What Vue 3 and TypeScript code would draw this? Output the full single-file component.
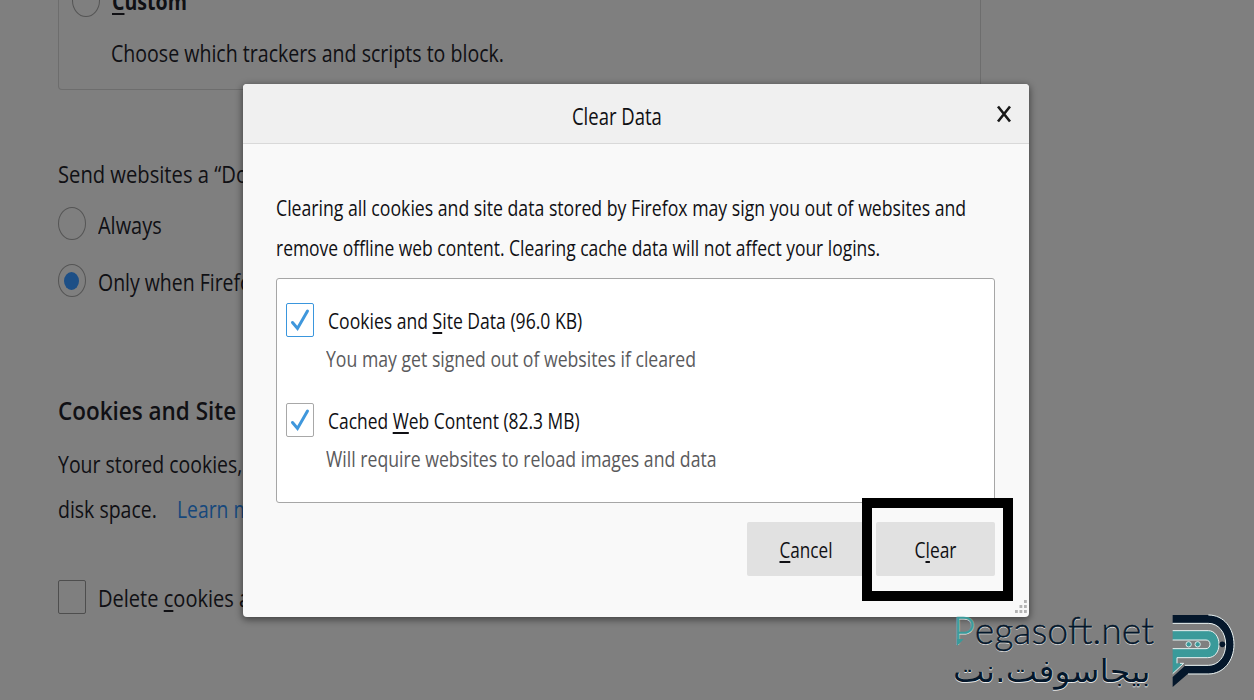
<template>
  <div class="page">
    <!-- preferences page behind the dialog -->
    <section class="tracking-card">
      <div class="card-option">
        <span class="radio"></span>
        <span v-fit="75" class="option-title"><u>C</u>ustom</span>
      </div>
      <div class="card-text">
        <span v-fit="393">Choose which trackers and scripts to block.</span>
      </div>
    </section>

    <section class="dnt">
      <div class="dnt-title"><span v-fit="190">Send websites a “Do</span></div>
      <div v-for="item in dntOptions" :key="item.label" class="dnt-option">
        <span :class="['radio', item.checked ? 'checked' : '']"></span>
        <span v-fit="item.width">{{ item.label }}</span>
      </div>
    </section>

    <section class="site-data">
      <h2><span v-fit="178">Cookies and Site</span></h2>
      <div class="line"><span v-fit="184">Your stored cookies,</span></div>
      <div class="line two">
        <span class="disk"><span v-fit="99">disk space.</span></span>
        <a class="link"><span v-fit="74">Learn m</span></a>
      </div>
      <div class="delete-row">
        <span class="box"></span>
        <span v-fit="152">Delete <u>c</u>ookies a</span>
      </div>
    </section>

    <!-- clear data dialog -->
    <div class="dialog">
      <header class="dialog-header">
        <h1><span v-fit="90">Clear Data</span></h1>
        <button class="close" aria-label="Close">
          <svg width="16" height="18" viewBox="0 0 16 18">
            <path d="M2 1.5 L14 16.5 M14 1.5 L2 16.5" />
          </svg>
        </button>
      </header>
      <div class="dialog-body">
        <p><span v-fit="690">Clearing all cookies and site data stored by Firefox may sign you out of websites and</span></p>
        <p><span v-fit="604">remove offline web content. Clearing cache data will not affect your logins.</span></p>

        <div class="list">
          <div v-for="item in clearItems" :key="item.key" class="item">
            <div class="item-label">
              <span :class="['check', item.focused ? 'focused' : '']">
                <svg width="28" height="34" viewBox="0 0 28 34">
                  <path d="M6.5 19.5 L11.5 25.5 L21.5 8" />
                </svg>
              </span>
              <span v-fit="item.width">{{ item.before }}<u>{{ item.key }}</u>{{ item.after }}</span>
            </div>
            <div class="item-hint">
              <span v-fit="item.hintWidth">{{ item.hint }}</span>
            </div>
          </div>
        </div>

        <div class="actions">
          <button class="btn"><span v-fit="53" class="mid"><u>C</u>ancel</span></button>
          <button class="btn"><span v-fit="42" class="mid">C<u>l</u>ear</span></button>
        </div>
      </div>
      <svg class="grip" width="12" height="14" viewBox="0 0 12 14">
        <rect v-for="(dot, i) in gripDots" :key="i" :x="dot[0]" :y="dot[1]" width="2.8" height="3" />
      </svg>
    </div>

    <div class="highlight"></div>

    <!-- site watermark -->
    <div class="watermark">
      <div class="brand">
        <div class="brand-en"><span v-fit="201"><b>P</b>egasoft.net</span></div>
        <div class="brand-ar"><span v-fit="198" dir="rtl">بيجاسوفت.نت</span></div>
      </div>
      <svg class="logo" width="94" height="95" viewBox="0 0 282 285">
        <path class="navy" d="M38 30 H145 C192 30 222 70 222 118 C222 168 190 206 145 206 H84 L38 246 V216 L75 182 H145 C175 182 197 155 197 118 C197 82 175 54 145 54 H38 Z" />
        <path class="rim" d="M38 55 H145 C175 55 197 82 197 118 C197 155 175 181 145 181 H75 M84 207 H145 C190 207 222 168 222 118 C222 70 192 30 145 30" />
        <path class="teal" d="M38 77 H145 C165 77 177 97 177 118 C177 141 164 158 143 158 H51 V175 H71 L38 206 V131 H138 C145 131 150 125 150 118 C150 110 145 105 138 105 H38 Z" />
        <path class="rim" d="M38 77 H145 C165 77 177 97 177 118 C177 141 164 158 143 158 H51 V175 M38 105 H138 C145 105 150 110 150 118 C150 125 145 131 138 131 H38 M60 175 H71 L38 206" />
        <circle class="eye" cx="86" cy="118" r="8" />
        <circle class="eye" cx="113" cy="118" r="8" />
        <circle class="dot" cx="187" cy="118" r="8.5" />
      </svg>
    </div>
  </div>
</template>

<script setup lang="ts">
interface DntOption {
  label: string;
  width: number;
  checked: boolean;
}

interface ClearItem {
  before: string;
  key: string; // access key, underlined
  after: string;
  width: number;
  hint: string;
  hintWidth: number;
  focused: boolean;
}

const dntOptions: DntOption[] = [
  { label: "Always", width: 64, checked: false },
  { label: "Only when Firefo", width: 154, checked: true },
];

const clearItems: ClearItem[] = [
  {
    before: "Cookies and ",
    key: "S",
    after: "ite Data (96.0 KB)",
    width: 254,
    hint: "You may get signed out of websites if cleared",
    hintWidth: 370,
    focused: true,
  },
  {
    before: "Cached ",
    key: "W",
    after: "eb Content (82.3 MB)",
    width: 252,
    hint: "Will require websites to reload images and data",
    hintWidth: 391,
    focused: false,
  },
];

const gripDots = [
  [9, 0],
  [4.5, 5],
  [9, 5],
  [0, 10],
  [4.5, 10],
  [9, 10],
];

// squeezes a text run horizontally to the given width
const vFit = {
  mounted(el: HTMLElement, binding: { value: number }) {
    el.style.transform = `scaleX(${binding.value / el.offsetWidth})`;
  },
};
</script>

<style>
body {
  margin: 0;
  background: #7f7f7f;
}
</style>

<style scoped>
.page {
  position: relative;
  width: 1254px;
  height: 700px;
  overflow: hidden;
  box-sizing: border-box;
  padding-left: 57.5px;
  background: #7f7f7f;
  color: #101014;
  font-family: "Open Sans", "Noto Sans", sans-serif;
  font-size: 24px;
}

.page span {
  white-space: nowrap;
  flex-shrink: 0;
}

.page span[style] {
  display: inline-block;
  transform-origin: left center;
}

.page span.mid {
  transform-origin: center;
}

u {
  text-decoration-thickness: 1.5px;
  text-underline-offset: 3px;
  text-decoration-skip-ink: none;
}

/* background page */
.tracking-card {
  width: 923.5px;
  height: 90px;
  box-sizing: border-box;
  border: 1px solid #6d6d6d;
  border-top: none;
  border-radius: 0 0 4px 4px;
  padding-left: 13px;
  display: flow-root;
}

.card-option {
  display: flex;
  align-items: center;
  height: 40px;
  margin-top: -20px;
  gap: 12px;
}

.option-title {
  font-weight: 700;
}

.card-text {
  height: 66px;
  line-height: 66px;
  padding-left: 39px;
}

.radio {
  width: 28px;
  height: 33px;
  box-sizing: border-box;
  border: 1px solid #555;
  border-radius: 50%;
  display: flex;
  align-items: center;
  justify-content: center;
}

.radio.checked::after {
  content: "";
  width: 15px;
  height: 18px;
  border-radius: 50%;
  background: #1d4f86;
}

.dnt {
  margin-top: 62px;
}

.dnt-title {
  height: 44px;
  line-height: 44px;
}

.dnt-option {
  display: flex;
  align-items: center;
  height: 57px;
  gap: 12px;
}

.dnt-option .radio {
  margin-top: -2px;
}

.site-data {
  margin-top: 70px;
}

.site-data h2 {
  margin: 0;
  height: 61px;
  line-height: 61px;
  font-size: 26px;
  font-weight: 600;
}

.line {
  height: 46px;
  line-height: 46px;
}

.line.two {
  display: flex;
  height: 45px;
  line-height: 44px;
}

.disk {
  width: 119px;
}

.link {
  color: #16487c;
}

.delete-row {
  display: flex;
  align-items: center;
  height: 52px;
  margin-top: 39px;
  gap: 12px;
}

.box {
  width: 28px;
  height: 34px;
  box-sizing: border-box;
  border: 1px solid #4e4e4e;
  border-radius: 2px;
}

/* dialog */
.dialog {
  position: absolute;
  left: 242.5px;
  top: 84px;
  width: 786px;
  height: 532.5px;
  border-radius: 4px;
  overflow: hidden;
  background: #f9f9f9;
  font-size: 22px;
  box-shadow: 0 2px 7px 1px rgba(0, 0, 0, 0.45);
}

.dialog-header {
  display: flex;
  align-items: center;
  height: 59px;
  background: #f0f0f0;
  border-bottom: 1px solid #d9d9d9;
}

.dialog-header h1 {
  flex: 1;
  display: flex;
  justify-content: center;
  margin: 5px 0 0;
  font-size: 23px;
  font-weight: 400;
}

.dialog-header h1 span[style] {
  transform-origin: center;
}

.close {
  width: 38px;
  height: 40px;
  padding: 0 12px 0 0;
  border: none;
  background: none;
  display: flex;
  align-items: center;
  justify-content: center;
}

.close path {
  stroke: #1a1a1a;
  stroke-width: 2.6;
  fill: none;
}

.dialog-body {
  padding: 43px 33.5px 0;
}

.dialog-body p {
  margin: 0;
  height: 40px;
  line-height: 40px;
}

.list {
  height: 225px;
  margin-top: 11px;
  box-sizing: border-box;
  border: 1px solid #a6a6a6;
  border-radius: 3px;
  background: #fff;
  padding: 20px 0 0 8.5px;
}

.item {
  height: 100px;
}

.item-label {
  display: flex;
  align-items: center;
  height: 41px;
  gap: 14px;
}

.item-hint {
  height: 36px;
  line-height: 36px;
  padding-left: 40px;
  color: #5a5a5c;
}

.check {
  width: 28px;
  height: 34px;
  box-sizing: border-box;
  border: 1px solid #a8a8a8;
  border-radius: 2px;
  display: flex;
  align-items: center;
  justify-content: center;
}

.check.focused {
  border: 1.5px solid #3a96dd;
}

.check svg {
  flex-shrink: 0;
}

.check path {
  fill: none;
  stroke: #3f97dc;
  stroke-width: 3;
  stroke-linecap: round;
}

.actions {
  display: flex;
  justify-content: flex-end;
  gap: 10px;
  margin-top: 19px;
}

.btn {
  width: 119px;
  height: 54px;
  padding: 0;
  border: none;
  border-radius: 2px;
  background: #e1e1e1;
  color: #101014;
  font-family: inherit;
  font-size: 22px;
}

.grip {
  position: absolute;
  right: 2px;
  bottom: 3px;
  fill: #b4b4b4;
}

.highlight {
  position: absolute;
  left: 862px;
  top: 498px;
  width: 151px;
  height: 103px;
  box-sizing: border-box;
  border: 10px solid #000;
}

/* watermark */
.watermark {
  position: absolute;
  left: 953px;
  top: 605px;
  display: flex;
  color: #04172b;
  text-shadow: 0 1px 0 rgba(255, 255, 255, 0.8), 1px 0 0 rgba(255, 255, 255, 0.4);
}

.brand {
  width: 207px;
}

.brand-en {
  height: 48px;
  line-height: 48px;
  font-family: Lato, sans-serif;
  font-size: 38px;
  font-weight: 300;
  -webkit-text-stroke: 0.5px currentColor;
}

.brand-en b {
  position: relative;
  font-weight: 300;
  color: #3a9a9a;
}

/* tail of the P */
.brand-en b::after {
  content: "";
  position: absolute;
  left: 4px;
  bottom: 6px;
  width: 7px;
  height: 7px;
  background: #3a9a9a;
  clip-path: polygon(0 0, 100% 0, 0 100%);
}

.brand-ar {
  height: 40px;
  line-height: 36px;
  font-family: "DejaVu Sans", sans-serif;
  font-size: 31px;
}

.navy {
  fill: #04172b;
}

.teal {
  fill: #3a9a9a;
}

.rim {
  fill: none;
  stroke: #e9f3f3;
  stroke-width: 3;
}

.eye {
  fill: #3a9a9a;
  stroke: #d9ecec;
  stroke-width: 3;
}

.dot {
  fill: #04172b;
}
</style>
